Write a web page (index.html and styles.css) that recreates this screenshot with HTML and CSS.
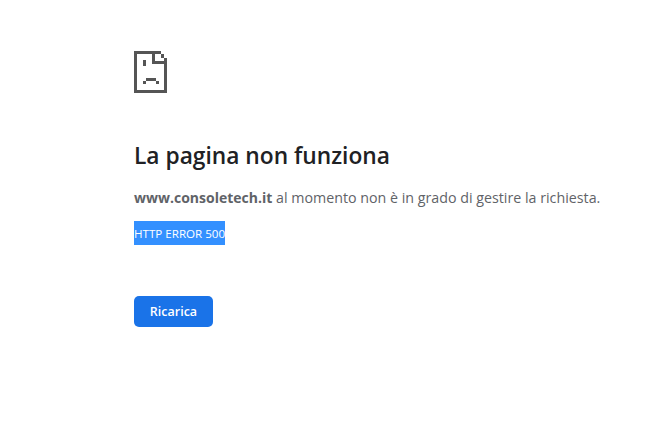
FILE: index.html
```html
<!DOCTYPE html>
<html lang="it">
<head>
    <meta charset="UTF-8">
    <title>www.consoletech.it</title>
    <link rel="stylesheet" href="styles.css">
</head>
<body>
    <main class="error-page">
        <svg class="sad-page" width="34" height="42" viewBox="0 0 34 42" shape-rendering="crispEdges" aria-hidden="true">
            <rect x="0" y="0" width="27" height="3"/>
            <rect x="0" y="0" width="3" height="42"/>
            <rect x="0" y="39" width="33" height="3"/>
            <rect x="30" y="7" width="3" height="35"/>
            <rect x="27" y="3" width="3" height="4"/>
            <rect x="18" y="3" width="3" height="10"/>
            <rect x="18" y="10" width="15" height="3"/>
            <rect x="9" y="9" width="3" height="6"/>
            <rect x="12" y="27" width="10" height="3"/>
            <rect x="9" y="30" width="3" height="3"/>
            <rect x="22" y="30" width="3" height="3"/>
        </svg>
        <h1>La pagina non funziona</h1>
        <p class="message"><strong>www.consoletech.it</strong> al momento non è in grado di gestire la richiesta.</p>
        <div class="error-code"><span>HTTP ERROR 500</span></div>
        <button class="reload">Ricarica</button>
    </main>
</body>
</html>
```

FILE: styles.css
```css
body {
    margin: 0;
    background: #fff;
    font-family: "Open Sans", "Noto Sans", sans-serif;
    color: #5f6368;
}
.error-page {
    padding: 51px 0 0 134px;
}
.sad-page {
    display: block;
    fill: #555;
}
h1 {
    margin: 47px 0 0;
    color: #202124;
    font-size: 22.75px;
    line-height: 32px;
    font-weight: 600;
}
.message {
    margin: 15px 0 0;
    font-size: 14.25px;
    line-height: 22px;
}
.message strong {
    font-size: 14px;
}
.error-code {
    margin-top: 12px;
    font-size: 11.6px;
    line-height: 24px;
    height: 24px;
}
.error-code span {
    display: inline-block;
    height: 23px;
    padding-top: 1px;
    line-height: 23px;
    background: #3390ff;
    color: #fff;
}
.reload {
    display: block;
    margin-top: 51px;
    width: 79px;
    height: 31px;
    padding: 0 0 1px;
    border: 0;
    border-radius: 5px;
    background: #1a73e8;
    color: #fff;
    font-family: inherit;
    font-size: 12.5px;
    font-weight: 600;
}
```
